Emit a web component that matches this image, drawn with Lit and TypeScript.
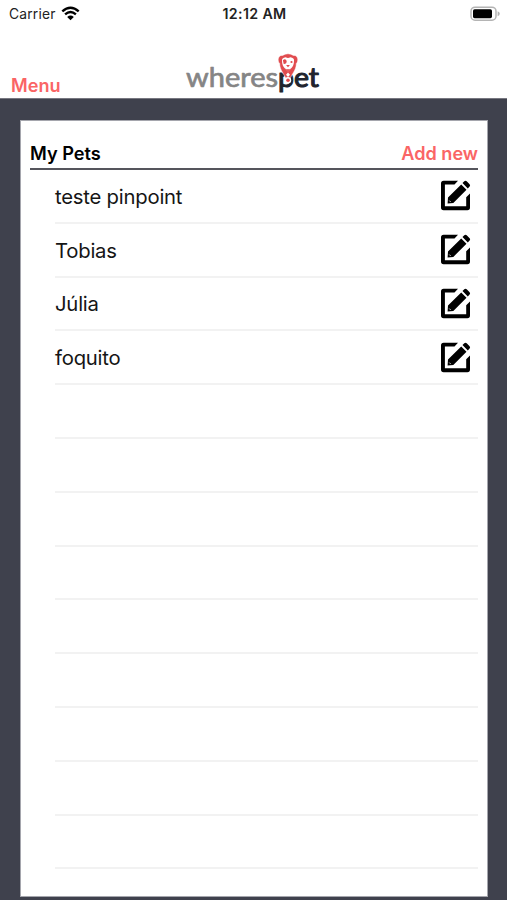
import { LitElement, html, svg, css } from "lit";
import { customElement, property } from "lit/decorators.js";

@customElement("status-bar")
class StatusBar extends LitElement {
  static styles = css`
    :host { display: grid; grid-template-columns: 1fr auto 1fr; align-items: center; height: 28px; padding: 0 7px 0 9px; color: #222; }
    .left { display: flex; align-items: center; gap: 5px; }
    .carrier { font-size: 13.8px; letter-spacing: 0.2px; }
    .time { font-weight: 600; font-size: 14.2px; letter-spacing: 0.35px; padding: 0 0 2px; }
    .battery { justify-self: end; }
    svg { display: block; margin-top: -1px; }
  `;
  render() {
    return html`
      <div class="left">
        <span class="carrier">Carrier</span>
        <svg width="19" height="15" viewBox="0 0 19 15">
          <path d="M1.3 5.4Q9.5-1.8 17.7 5.4M4.1 8.4Q9.5 3.7 14.9 8.4" fill="none" stroke="#000" stroke-width="2.4" />
          <path d="M9.5 14.2L6.2 10.9Q9.5 8.2 12.8 10.9Z" />
        </svg>
      </div>
      <span class="time">12:12 AM</span>
      <svg class="battery" width="30" height="16" viewBox="0 0 30 16">
        <rect x="1" y="1.2" width="25" height="13" rx="4" fill="#fff" stroke="#b4b4b4" stroke-width="1.5" />
        <rect x="3" y="3.2" width="19" height="9" rx="1.6" />
        <path d="M27.6 5.2Q29.8 6 29.8 7.7T27.6 10.2Z" fill="#b4b4b4" />
      </svg>
    `;
  }
}

@customElement("brand-logo")
class BrandLogo extends LitElement {
  static styles = css`
    :host { display: block; }
    svg { display: block; overflow: visible; }
    .word { font-family: Lato, "Liberation Sans", sans-serif; font-size: 27.5px; font-weight: 400; stroke-width: 0.7; stroke-linejoin: round; }
    .grey { fill: #858585; stroke: #858585; }
    .dark { fill: #20242e; stroke: #20242e; stroke-width: 1.1; }
  `;
  render() {
    return html`
      <svg width="136" height="46" viewBox="0 0 136 46">
        <text class="word grey" x="1" y="34" textLength="92" lengthAdjust="spacingAndGlyphs">wheres</text>
        <text class="word dark" x="93" y="34" textLength="41" lengthAdjust="spacingAndGlyphs">pet</text>
        ${svg`
          <path d="M103 31C100 21 94.5 17.5 94.7 10.5C91.9 8 93.2 1.5 97.5 2.5Q103-1 108.5 2.5C112.8 1.5 114.1 8 111.3 10.5C111.5 17.5 106 21 103 31Z" fill="#e14c4f" stroke="#fff" stroke-width=".5" />
          <path d="M97 8Q96.5 4.7 100.7 4.2Q103 5.8 105.3 4.2Q109.5 4.7 109 8Q109 12.5 106 15.5L103 18.5L100 15.5Q97 12.5 97 8Z" fill="#fff" />
          <path d="M97.9 7.2Q100.5 5.2 101.7 8Q101.7 11.2 98.7 11Z" fill="#e14c4f" />
          <circle cx="106.5" cy="9" r="1.1" fill="#e14c4f" />
          <path d="M101.1 12H104.9L103 14.3ZM100 15.4Q103 17.2 106 15.4L103 18.5Z" fill="#e14c4f" />
          <path d="M103 19.5L105 21.8L103 24L101 21.8Z" fill="#fff" />
          <circle cx="103" cy="27.2" r="3.2" fill="#fff" />
          <circle cx="103" cy="27.2" r="1.8" fill="#e14c4f" />
        `}
      </svg>
    `;
  }
}

@customElement("pet-row")
class PetRow extends LitElement {
  @property() name = "";
  static styles = css`
    :host { display: flex; align-items: center; justify-content: space-between; box-sizing: border-box; height: 53.8px; padding-right: 7px; border-bottom: 2px solid #f2f2f2; }
    .name { font-size: 20.3px; letter-spacing: -0.22px; color: #151515; padding-top: 1px; }
    svg { display: block; }
  `;
  render() {
    return html`
      <span class="name">${this.name}</span>
      ${this.name
        ? html`<svg width="31" height="31" viewBox="0 0 31 31">
            <path d="M18 .8L14.5 4.4H4.9V26.2H26.2V17.2L30 13.5V27.6Q30 30.2 27.4 30.2H3.6Q1 30.2 1 27.6V3.4Q1 .8 3.6 .8Z" />
            <path d="M8 17.6L21.2 4.4L26.5 9.7L13.3 22.9L7.6 23.6ZM22.5 3.1L24.3 1.3Q25.4 .3 26.7 1.3L29.6 4.2Q30.6 5.4 29.6 6.6L27.8 8.4Z" />
            <path d="M9.3 20.6L10.6 21.9" stroke="#fff" stroke-width=".9" />
          </svg>`
        : null}
    `;
  }
}

@customElement("app-root")
class AppRoot extends LitElement {
  static styles = css`
    :host { display: flex; flex-direction: column; box-sizing: border-box; height: 900px; background: #3f414d; color: #000; font-family: Inter, "Liberation Sans", sans-serif; }
    .top { background: #fff; height: 99px; border-bottom: 1px solid #777780; box-sizing: border-box; }
    .nav { display: grid; grid-template-columns: 1fr auto 1fr; align-items: end; height: 70px; box-sizing: border-box; padding: 0 12px 0 11px; }
    .link { color: #fa6565; font-weight: 600; font-size: 18.1px; line-height: 22px; }
    .menu { padding-bottom: 2px; }
    .logo { margin-bottom: -1px; }
    .card { display: flex; flex-direction: column; flex: 1; margin: 21px 19px 3px 20px; background: #fff; border: 1px solid #a5a6ad; box-sizing: border-box; padding: 0 9px; overflow: hidden; }
    .head { display: flex; align-items: flex-end; justify-content: space-between; height: 49px; flex: none; box-sizing: border-box; padding-bottom: 4px; border-bottom: 2px solid #55555c; }
    .title { font-weight: 600; font-size: 18.2px; line-height: 22px; }
    .list { padding-left: 25px; }
  `;
  private pets = ["teste pinpoint", "Tobias", "Júlia", "foquito", ...Array(9).fill("")];
  render() {
    return html`
      <header class="top">
        <status-bar></status-bar>
        <nav class="nav">
          <span class="link menu">Menu</span>
          <brand-logo class="logo"></brand-logo>
        </nav>
      </header>
      <main class="card">
        <div class="head">
          <span class="title">My Pets</span>
          <span class="link">Add new</span>
        </div>
        <div class="list">${this.pets.map((n) => html`<pet-row .name=${n}></pet-row>`)}</div>
      </main>
    `;
  }
}
